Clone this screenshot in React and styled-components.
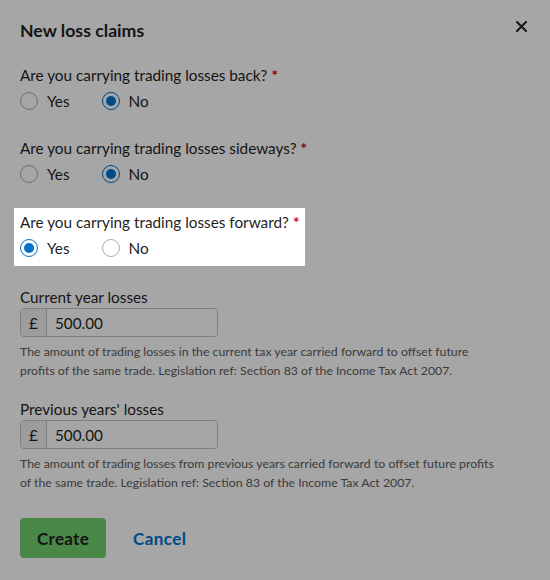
import React from 'react';
import styled, {createGlobalStyle} from 'styled-components';

const GlobalStyle = createGlobalStyle`
  html, body {
    margin: 0;
    padding: 0;
    background: #ffffff;
  }
  body {
    font-family: Lato, "Noto Sans", "Liberation Sans", sans-serif;
    color: #1f1f1f;
  }
`

const Modal = styled.div`
  width: 550px;
  min-height: 580px;
  box-sizing: border-box;
  padding: 19px 20px 20px;
  background: #ffffff;
`

const Overlay = styled.div`
  position: fixed;
  inset: 0;
  background: rgba(0, 0, 0, 0.35);
  z-index: 1;
`

const Header = styled.div`
  display: flex;
  justify-content: space-between;
  align-items: center;
  height: 24px;
  margin-bottom: 18px;
`

const Title = styled.h2`
  margin: 0;
  font-size: 17.7px;
  font-weight: 700;
  line-height: 24px;
`

const CloseButton = styled.button`
  border: 0;
  background: none;
  padding: 0;
  margin: -10px 0 0 0;
  width: 18px;
  height: 18px;
  display: flex;
  align-items: center;
  justify-content: center;
  cursor: pointer;
  color: #1f2429;
`

const Question = styled.fieldset`
  position: relative;
  z-index: ${p => (p.$highlight ? 2 : 0)};
  background: ${p => (p.$highlight ? '#ffffff' : 'transparent')};
  border: 0;
  width: fit-content;
  margin: 0 0 ${p => p.$gap || 15}px -6px;
  padding: 4px 6px 8px;
`

const QuestionLabel = styled.legend`
  float: left;
  width: 100%;
  padding: 0;
  font-size: 15.3px;
  line-height: 20px;
  margin-bottom: 6px;
`

const Required = styled.span`
  color: #d0021b;
  font-weight: 700;
  margin-left: 4px;
`

const Options = styled.div`
  clear: both;
  display: flex;
  gap: 32px;
  height: 20px;
`

const Option = styled.label`
  display: flex;
  align-items: center;
  gap: 9px;
  font-size: 15.3px;
  line-height: 20px;
  cursor: pointer;
`

const RadioCircle = styled.span`
  box-sizing: border-box;
  width: 18px;
  height: 18px;
  border-radius: 50%;
  border: ${p => (p.$checked ? '1.5px solid #0073cf' : '1px solid #a4adb6')};
  background: #ffffff;
  display: flex;
  align-items: center;
  justify-content: center;

  &::after {
    content: '';
    width: 10px;
    height: 10px;
    border-radius: 50%;
    background: ${p => (p.$checked ? '#0073cf' : 'transparent')};
  }
`

const Field = styled.div`
  margin-bottom: 19px;
`

const FieldLabel = styled.div`
  font-size: 15.3px;
  line-height: 20px;
  margin-bottom: 1px;
`

const InputGroup = styled.div`
  display: flex;
  width: 198px;
  height: 29px;
  box-sizing: border-box;
  border: 1px solid #c4c4c4;
  border-radius: 4px;
  overflow: hidden;
`

const Prefix = styled.span`
  width: 25px;
  display: flex;
  align-items: center;
  justify-content: center;
  background: #f0f0f0;
  border-right: 1px solid #c4c4c4;
  font-size: 15.3px;
`

const Input = styled.input`
  flex: 1;
  border: 0;
  outline: none;
  padding: 0 8px;
  font-family: inherit;
  font-size: 15.3px;
  color: #1f1f1f;
  background: #ffffff;
  min-width: 0;
`

const Help = styled.p`
  margin: 5px 0 0;
  max-width: 485px;
  font-size: 12.3px;
  line-height: 19px;
  color: #5c5c5c;
`

const Actions = styled.div`
  display: flex;
  align-items: center;
  gap: 27px;
  margin-top: 26px;
`

const CreateButton = styled.button`
  height: 40px;
  padding: 0 17px;
  border: 0;
  border-radius: 4px;
  background: #71d26c;
  color: #1f1f1f;
  font-family: inherit;
  font-size: 17px;
  font-weight: 700;
  letter-spacing: 0.3px;
  cursor: pointer;
`

const CancelLink = styled.button`
  border: 0;
  background: none;
  padding: 0;
  color: #0073cf;
  font-family: inherit;
  font-size: 17px;
  font-weight: 700;
  letter-spacing: 0.4px;
  cursor: pointer;
`

const questions = [
  {id: 'back', label: 'Are you carrying trading losses back?', value: 'no'},
  {id: 'sideways', label: 'Are you carrying trading losses sideways?', value: 'no', gap: 16},
  {id: 'forward', label: 'Are you carrying trading losses forward?', value: 'yes', highlight: true, gap: 21},
]

const fields = [
  {
    id: 'current',
    label: 'Current year losses',
    value: '500.00',
    help: 'The amount of trading losses in the current tax year carried forward to offset future profits of the same trade. Legislation ref: Section 83 of the Income Tax Act 2007.',
  },
  {
    id: 'previous',
    label: "Previous years' losses",
    value: '500.00',
    help: 'The amount of trading losses from previous years carried forward to offset future profits of the same trade. Legislation ref: Section 83 of the Income Tax Act 2007.',
  },
]

function RadioQuestion({label, value, highlight, gap}) {
  return (
    <Question $highlight={highlight} $gap={gap}>
      <QuestionLabel>
        {label}<Required>*</Required>
      </QuestionLabel>
      <Options>
        <Option>
          <RadioCircle $checked={value === 'yes'}/>
          Yes
        </Option>
        <Option>
          <RadioCircle $checked={value === 'no'}/>
          No
        </Option>
      </Options>
    </Question>
  )
}

export default function App() {
  return (
    <>
      <GlobalStyle/>
      <Modal>
        <Header>
          <Title>New loss claims</Title>
          <CloseButton aria-label="Close">
            <svg width="11" height="11" viewBox="0 0 11 11">
              <path d="M1 1 L10 10 M10 1 L1 10" stroke="currentColor" strokeWidth="2" strokeLinecap="round"/>
            </svg>
          </CloseButton>
        </Header>

        {questions.map(q => <RadioQuestion key={q.id} {...q}/>)}

        {fields.map(f => (
          <Field key={f.id}>
            <FieldLabel>{f.label}</FieldLabel>
            <InputGroup>
              <Prefix>£</Prefix>
              <Input defaultValue={f.value}/>
            </InputGroup>
            <Help>{f.help}</Help>
          </Field>
        ))}

        <Actions>
          <CreateButton>Create</CreateButton>
          <CancelLink>Cancel</CancelLink>
        </Actions>
      </Modal>
      <Overlay/>
    </>
  )
}
